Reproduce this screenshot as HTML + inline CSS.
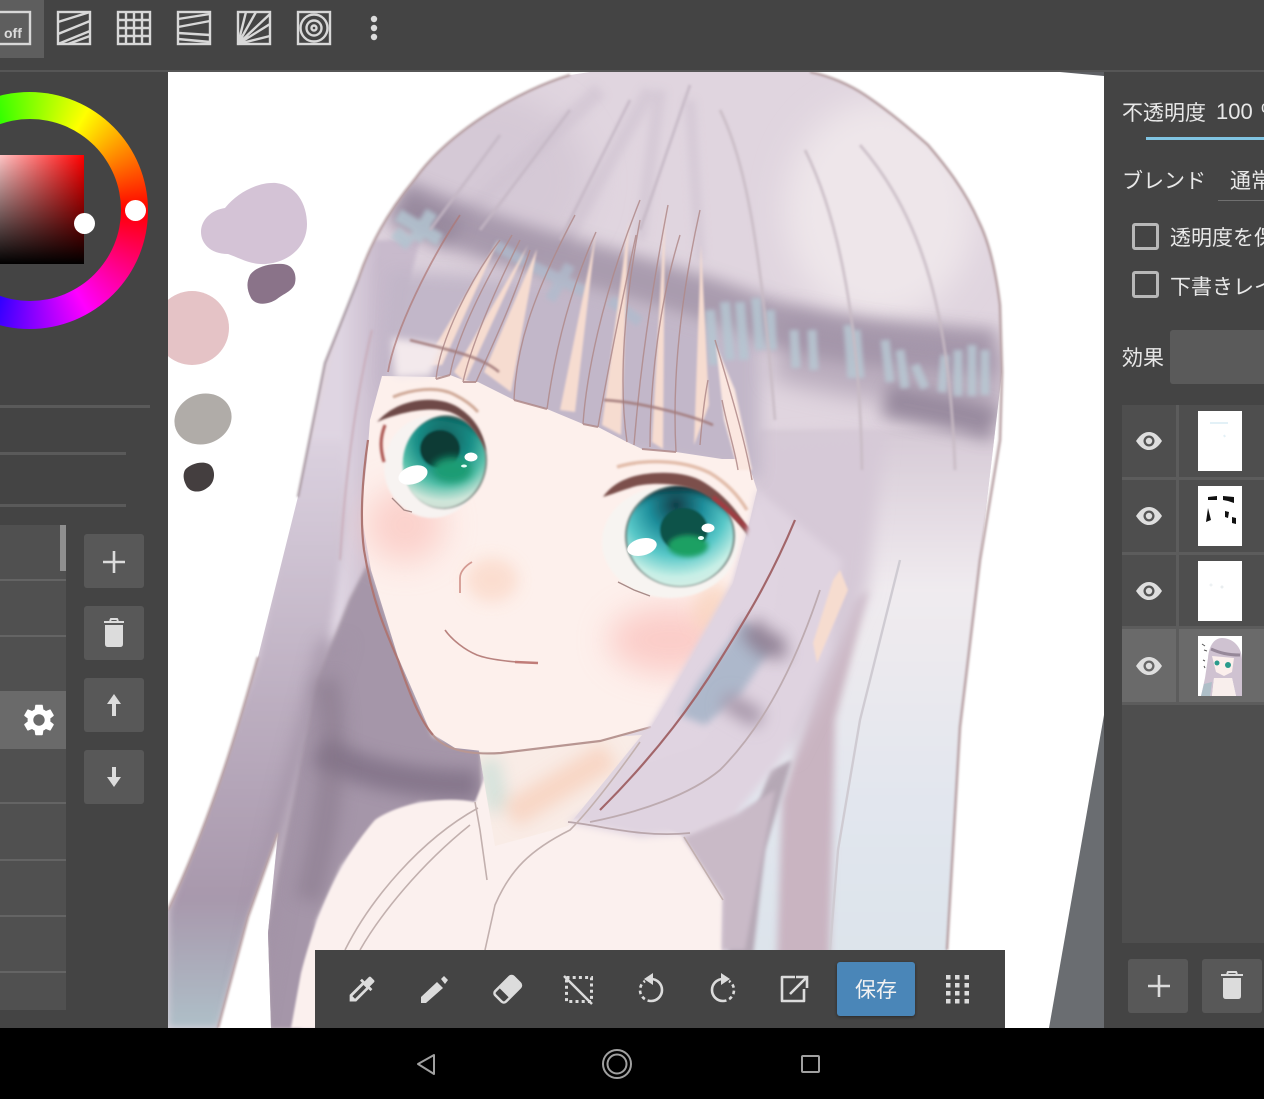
<!DOCTYPE html>
<html lang="ja">
<head>
<meta charset="utf-8">
<title>Drawing app</title>
<style>
html,body{margin:0;padding:0;width:1264px;height:1099px;overflow:hidden;background:#444}
body{position:relative;font-family:"Liberation Sans","Noto Sans CJK JP",sans-serif;color:#e8e8e8}
.a{position:absolute}
.t{position:absolute;white-space:nowrap;font-size:21px;line-height:26px;color:#e8e8e8}
.btn{position:absolute;background:#585858;border-radius:3px}
.sep{position:absolute;background:#646464;height:2px;left:0;width:66px}
.cb{position:absolute;left:1132px;width:21px;height:21px;border:3px solid #b8b8b8;border-radius:3px}
.thumb{position:absolute;left:1198px;width:44px;height:60px;background:#fff}
</style>
</head>
<body>
<svg class="a" style="left:0;top:0" width="1264" height="1099" viewBox="0 0 1264 1099">
<defs>
<filter id="b1" filterUnits="userSpaceOnUse" x="0" y="0" width="1264" height="1099"><feGaussianBlur stdDeviation="1"/></filter>
<filter id="b2" filterUnits="userSpaceOnUse" x="0" y="0" width="1264" height="1099"><feGaussianBlur stdDeviation="2"/></filter>
<filter id="b4" filterUnits="userSpaceOnUse" x="0" y="0" width="1264" height="1099"><feGaussianBlur stdDeviation="4"/></filter>
<filter id="b8" filterUnits="userSpaceOnUse" x="0" y="0" width="1264" height="1099"><feGaussianBlur stdDeviation="8"/></filter>
<filter id="b12" filterUnits="userSpaceOnUse" x="0" y="0" width="1264" height="1099"><feGaussianBlur stdDeviation="12"/></filter>
<filter id="b16" filterUnits="userSpaceOnUse" x="0" y="0" width="1264" height="1099"><feGaussianBlur stdDeviation="16"/></filter>
<clipPath id="cv"><rect x="168" y="72" width="936" height="956"/></clipPath>
<clipPath id="hair"><path d="M570,75C520,90 450,130 415,179C385,215 368,250 358,280L341,323L325,363L298,497L258,657C240,720 215,810 168,910L168,1028L218,1028L248,917L278,833L268,933L271,1028L947,1028L947,950L960,727L980,560L1002,372L1000,305C995,265 988,240 979,222C965,190 945,165 928,145C900,120 880,105 865,95C850,85 830,76 810,72L590,72Z"/></clipPath>
<clipPath id="neck"><path d="M478,745L642,735L568,826L495,846Z"/></clipPath>
<clipPath id="eyeL"><ellipse cx="444" cy="462" rx="41" ry="46" transform="rotate(10 444 462)"/></clipPath>
<clipPath id="eyeR"><ellipse cx="680" cy="536" rx="53" ry="50"/></clipPath>
<linearGradient id="rg" gradientUnits="userSpaceOnUse" x1="0" y1="430" x2="0" y2="1000"><stop offset="0" stop-color="#d6cad6"/><stop offset=".28" stop-color="#f0ebef"/><stop offset=".65" stop-color="#e2e6ee"/><stop offset="1" stop-color="#dbe3ea"/></linearGradient>
<linearGradient id="ll" gradientUnits="userSpaceOnUse" x1="0" y1="440" x2="0" y2="1028"><stop offset="0" stop-color="#dbd1df"/><stop offset=".45" stop-color="#bcaec0"/><stop offset=".78" stop-color="#a898ac"/><stop offset="1" stop-color="#aebfc8"/></linearGradient>
<linearGradient id="lu" gradientUnits="userSpaceOnUse" x1="340" y1="0" x2="380" y2="0"><stop offset="0" stop-color="#dfd5e2"/><stop offset="1" stop-color="#c8bacc"/></linearGradient>
<radialGradient id="irL" gradientUnits="userSpaceOnUse" cx="444" cy="440" r="72"><stop offset="0" stop-color="#0e5a58"/><stop offset=".38" stop-color="#1a8f88"/><stop offset=".62" stop-color="#57c0aa"/><stop offset=".85" stop-color="#cfe6da"/><stop offset="1" stop-color="#cfdcd2"/></radialGradient>
<radialGradient id="irR" gradientUnits="userSpaceOnUse" cx="676" cy="505" r="85"><stop offset="0" stop-color="#103f49"/><stop offset=".32" stop-color="#1f8f9c"/><stop offset=".6" stop-color="#58c8c8"/><stop offset=".85" stop-color="#c7efe6"/><stop offset="1" stop-color="#d7eee4"/></radialGradient>
</defs>

<rect x="0" y="0" width="1264" height="1099" fill="#444"/>
<rect x="0" y="70" width="1264" height="2" fill="#565656"/>

<g clip-path="url(#cv)">
<rect x="168" y="72" width="936" height="956" fill="#fff"/>
<path d="M1104,715L1049,1028L1104,1028Z" fill="#6a6d71"/>
<path d="M1060,72L1104,76L1104,72Z" fill="#5e6064"/>

<!-- palette blobs -->
<path d="M225,208C238,192 258,182 276,183C296,185 307,204 307,224C307,246 290,262 266,264C250,265 240,258 228,254C210,254 201,243 201,232C201,220 211,210 225,208Z" fill="#d4c3d6"/>
<path d="M250,275C256,266 272,263 283,264C293,265 297,274 295,283C293,291 283,294 277,299C268,305 256,306 251,298C247,290 246,283 250,275Z" fill="#8a7389"/>
<ellipse cx="192" cy="328" rx="37" ry="37" fill="#e5c3c6"/>
<ellipse cx="203" cy="419" rx="29" ry="25" fill="#b0aca8" transform="rotate(-20 203 419)"/>
<path d="M185,470C190,463 207,459 212,467C216,474 214,484 207,488C199,494 189,492 186,485C183,479 183,474 185,470Z" fill="#443e3f"/>

<!-- hair -->
<g clip-path="url(#hair)">
<rect x="168" y="72" width="860" height="956" fill="#e0d5df"/>
<ellipse cx="480" cy="180" rx="110" ry="90" fill="#d5c9d6" filter="url(#b16)"/>
<ellipse cx="880" cy="210" rx="95" ry="110" fill="#eee6ea" filter="url(#b16)"/>
<g fill="none" stroke="#cfc2d0" filter="url(#b4)" opacity=".6">
<path d="M650,90L560,250" stroke-width="14"/>
<path d="M660,90L640,240" stroke-width="12"/>
<path d="M600,90L460,220" stroke-width="16"/>
<path d="M690,100L700,260" stroke-width="10"/>
</g>
<!-- upper left lock -->
<path d="M358,240L420,240L385,380L368,460L362,520L374,580L398,660L345,820L300,850L260,700L298,497L341,323Z" fill="url(#lu)" filter="url(#b2)"/>
<!-- outer lower lock -->
<path d="M300,440L345,440L348,520L322,680L280,833L250,917L218,1028L168,1028L168,910L258,657Z" fill="url(#ll)" filter="url(#b4)"/>
<!-- behind-face mass -->
<path d="M368,565L400,660L432,738L480,750L480,805L420,800L375,822L340,865L315,920L300,1028L270,1028L268,930L290,820L318,680L350,600Z" fill="#a5969f" filter="url(#b2)"/>
<path d="M368,565L400,660L432,738L480,750L480,805L420,800L375,822L340,865L315,920L300,1028L270,1028L268,930L290,820L318,680L350,600Z" fill="#a596ac" filter="url(#b2)" opacity=".8"/>
<path d="M318,640L350,640L300,800L262,1028L230,1028L272,820Z" fill="#a293a6" filter="url(#b8)" opacity=".7"/>
<path d="M320,750C360,775 420,785 478,785" stroke="#7f7085" stroke-width="30" fill="none" filter="url(#b8)" opacity=".8"/>
<path d="M325,680C338,720 335,800 308,900" stroke="#857688" stroke-width="26" fill="none" filter="url(#b8)" opacity=".5"/>
<!-- right long strands -->
<path d="M760,430L1005,430L960,1028L722,1028Z" fill="url(#rg)" filter="url(#b2)"/>
<path d="M868,590L835,720L828,1028L775,1028L782,800L815,690L850,600Z" fill="#c9b4c1" filter="url(#b4)"/>
<path d="M722,1028L745,1028L765,850L792,760L770,770L735,870Z" fill="#b5a8b5" filter="url(#b2)"/>
<path d="M750,440L885,430L868,590L820,700L790,760L755,620Z" fill="#d6c9d7" filter="url(#b8)"/>
<!-- bang fill -->
<path d="M388,270L560,280L760,340L760,480L600,450L500,420L380,385Z" fill="#c1b6c8" filter="url(#b8)" opacity=".95"/>
<!-- shadow band -->
<path d="M398,202C440,218 490,240 560,258C620,275 680,290 740,312C810,340 890,345 995,352" stroke="#9c8ea3" stroke-width="46" fill="none" filter="url(#b8)" opacity=".8"/>
<path d="M780,345C850,365 930,370 1005,385" stroke="#a193a7" stroke-width="70" fill="none" filter="url(#b12)" opacity=".6"/>
<path d="M400,205C420,215 440,225 455,235" stroke="#8b7d92" stroke-width="30" fill="none" filter="url(#b8)" opacity=".55"/>
<path d="M885,400C920,408 955,412 995,425" stroke="#8f8196" stroke-width="34" fill="none" filter="url(#b8)" opacity=".85"/>
<path d="M398,215L440,240M415,240L432,212M395,232L410,245" stroke="#b2c4d0" stroke-width="13" filter="url(#b2)" opacity=".85"/>
<path d="M530,265L585,292M550,300L570,265M610,300L640,322M495,245L525,262" stroke="#afbccd" stroke-width="11" filter="url(#b2)" opacity=".75"/>
<path d="M710,310L714,365M725,302L730,360M740,302L744,360M756,298L760,350M770,310L772,350" stroke="#b5c6d2" stroke-width="10" filter="url(#b2)" opacity=".85"/>
<path d="M794,330L796,368M812,330L814,370M848,325L852,378M856,330L860,378M885,340L890,382M900,350L905,388M915,365L925,388M945,355L942,392M958,350L958,396M972,345L972,396M985,350L985,395" stroke="#b8c8d3" stroke-width="9" filter="url(#b2)" opacity=".85"/>
<!-- subtle strand lines -->
<g fill="none" filter="url(#b1)" opacity=".8">
<path d="M630,100L560,240M690,85L640,230M570,110L480,230M500,135L430,230" stroke="#c4b7c4" stroke-width="3"/>
<path d="M720,110C745,160 760,240 775,420M805,150C840,220 860,330 862,470M860,145C925,220 950,320 955,470" stroke="#c8bbc4" stroke-width="3"/>
<path d="M372,330C355,400 345,480 340,560" stroke="#c7a9b5" stroke-width="2"/>
</g>
</g>

<!-- body -->
<path d="M475,802C440,795 395,805 375,820C345,855 320,900 301,973L291,1028L722,1028L722,950L723,897L683,837L640,810L568,820L500,740Z" fill="#fbf0ee" filter="url(#b1)"/>
<path d="M683,837L723,897L722,950L745,950L775,790L737,813Z" fill="#c9bac7" filter="url(#b2)"/>
<!-- neck -->
<path d="M478,745L642,735L568,826L495,846Z" fill="#f9ece6"/>
<g clip-path="url(#neck)">
<path d="M488,760L498,810" stroke="#bcdcd4" stroke-width="22" fill="none" filter="url(#b8)" opacity=".6"/>
<path d="M510,815L610,755" stroke="#f8cdb8" stroke-width="28" fill="none" filter="url(#b8)" opacity=".7"/>
</g>

<!-- face -->
<path d="M367,460L370,420L382,376L436,377L450,375L463,380L478,382L514,400L547,409L583,424L598,427L627,442L642,449L676,452L722,459L747,459L757,490L750,520L733,583L668,700L651,727L601,740L501,753L455,748L431,733L398,657L371,570L361,513Z" fill="#fdf0ec"/>
<ellipse cx="405" cy="525" rx="40" ry="38" fill="#fbcac4" filter="url(#b16)" opacity=".8"/>
<ellipse cx="670" cy="640" rx="62" ry="34" fill="#fbc4c0" filter="url(#b16)" opacity=".8"/>
<ellipse cx="715" cy="610" rx="22" ry="26" fill="#f9d3bc" filter="url(#b8)" opacity=".7"/>
<ellipse cx="492" cy="580" rx="26" ry="22" fill="#fbdccd" filter="url(#b8)" opacity=".9"/>

<!-- peach bang gaps -->
<g fill="#f6dcd0" filter="url(#b1)">
<path d="M499,239L442,365L424,365Z"/>
<path d="M528,245L465,382L454,372Z"/>
<path d="M537,249L511,392L484,372Z"/>
<path d="M596,232L575,412L560,410Z"/>
<path d="M629,219L621,435L602,425Z"/>
<path d="M665,205L663,449L652,442Z"/>
<path d="M701,245L709,405L694,445Z"/>
<path d="M716,345L735,390L752,470L738,470L724,420Z" fill="#fbe7e0"/>
</g>
<path d="M392,338L395,378L430,376L445,345Z" fill="#f3e9ec" filter="url(#b4)"/>

<!-- bang lines -->
<g fill="none" stroke="#b08a8a" stroke-width="1.4" opacity=".85">
<path d="M514,400L547,409M583,424L598,427M642,449L676,452M436,379L450,375M463,382L476,382" stroke-width="2"/>
<path d="M514,400C516,350 530,300 575,215M547,409C555,350 570,290 596,232M583,424C586,380 600,300 640,200M598,427C606,380 620,310 636,235M627,442C618,380 625,300 640,220M634,445C640,370 650,300 668,205M676,452C672,380 680,300 700,210M650,447C650,380 660,300 680,235"/>
<path d="M436,379C440,340 470,280 500,240M450,375C456,340 480,290 512,235M463,382C470,350 490,300 520,240M476,382C490,350 510,310 530,250"/>
<path d="M715,340C730,390 745,440 752,480M722,400C728,430 735,450 738,470M700,445C702,420 705,395 708,380"/>
</g>
<g fill="none" stroke="#a27a7a" stroke-width="2.4" filter="url(#b1)">
<path d="M410,340C440,348 480,355 499,372M604,400C640,402 690,415 713,425"/>
</g>
<g fill="none" stroke="#ae7673" stroke-width="1.8">
<path d="M388,372C395,330 430,260 460,215" opacity=".7"/>
<path d="M368,440C362,480 360,520 364,550C372,600 385,630 398,660C410,695 420,720 433,735" stroke-width="2.2"/>
</g>
<path d="M433,735C445,750 470,755 501,753L600,741L651,727" stroke="#b89692" stroke-width="2.2" fill="none"/>

<!-- outline -->
<g fill="none" stroke="#b9a3a6" stroke-width="2.6" filter="url(#b1)">
<path d="M570,75C520,90 450,130 415,179C385,215 368,250 358,280"/>
<path d="M810,72C830,76 850,85 865,95C880,105 900,120 928,145C945,165 965,190 979,222C988,240 995,265 1000,305L1002,372L1000,440L980,560L960,727L947,950"/>
<path d="M358,280L341,323L325,363L298,497" stroke="#b0a2aa"/>
<path d="M258,657C240,720 215,810 168,910M278,833L248,917L218,1028"/>
</g>

<!-- eyes -->
<ellipse cx="432" cy="467" rx="48" ry="51" fill="#f7f3f1" filter="url(#b1)"/>
<g filter="url(#b1)">
<ellipse cx="445" cy="462" rx="42" ry="47" fill="#7a8781" transform="rotate(10 445 462)"/>
<g clip-path="url(#eyeL)">
<rect x="395" y="410" width="100" height="100" fill="url(#irL)"/>
<ellipse cx="440" cy="449" rx="20" ry="19" fill="#0a3a34"/>
<ellipse cx="452" cy="470" rx="20" ry="13" fill="#1f9c73" filter="url(#b4)"/>
<path d="M403,430C420,412 460,412 485,440L480,428L450,410L410,415Z" fill="#0c4c4a" filter="url(#b4)"/>
</g>
</g>
<ellipse cx="413" cy="475" rx="15" ry="9" fill="#fff" transform="rotate(-18 413 475)"/>
<ellipse cx="471" cy="457" rx="6.5" ry="4.5" fill="#fff"/>
<ellipse cx="464" cy="466" rx="3" ry="1.5" fill="#e6fff8"/>
<path d="M377,422C388,410 400,404 415,401C430,398 450,400 462,410C476,420 484,434 486,452C478,432 466,418 450,412C430,406 400,412 377,422Z" fill="#6e4a46" filter="url(#b1)"/>
<path d="M393,397C410,390 437,385 455,395C465,400 472,405 478,412" stroke="#cfa997" stroke-width="3" fill="none" filter="url(#b1)"/>
<path d="M385,425C380,438 380,448 384,462" stroke="#a8504c" stroke-width="3" fill="none" filter="url(#b1)"/>

<ellipse cx="670" cy="542" rx="68" ry="56" fill="#f7f4f1" filter="url(#b1)"/>
<g filter="url(#b1)">
<ellipse cx="680" cy="536" rx="55" ry="51" fill="#6a7d78"/>
<g clip-path="url(#eyeR)">
<rect x="625" y="485" width="110" height="105" fill="url(#irR)"/>
<path d="M630,510C650,485 710,480 735,520L730,490L680,480L635,490Z" fill="#0d2f36" filter="url(#b4)"/>
<ellipse cx="684" cy="530" rx="24" ry="22" fill="#0e5248"/>
<ellipse cx="688" cy="546" rx="20" ry="11" fill="#1fa063" filter="url(#b2)"/>
</g>
</g>
<ellipse cx="642" cy="547" rx="15" ry="8.5" fill="#fff" transform="rotate(-14 642 547)"/>
<ellipse cx="708" cy="528" rx="6.5" ry="4.5" fill="#fff"/>
<ellipse cx="701" cy="538" rx="3" ry="2" fill="#eafffa"/>
<path d="M603,497C610,487 620,480 635,476C650,472 680,470 700,480C722,492 745,515 757,550C742,525 725,505 700,492C680,482 645,482 630,488C620,491 610,495 603,497Z" fill="#7c4f4b" filter="url(#b1)"/>
<path d="M713,497C725,507 740,520 752,534" stroke="#9e3c42" stroke-width="4.5" fill="none" filter="url(#b1)"/>
<path d="M617,467C640,460 680,458 710,473C725,482 738,495 747,510" stroke="#e2bdab" stroke-width="3.5" fill="none" filter="url(#b1)"/>
<path d="M392,498L404,510L412,512M618,582L634,590L650,596" stroke="#a88b88" stroke-width="1.3" fill="none"/>

<!-- nose and mouth -->
<path d="M472,562C465,566 460,572 460,578L460,593" stroke="#d49a92" stroke-width="1.8" fill="none"/>
<path d="M445,630C452,640 465,650 477,655C490,660 515,662 520,662" stroke="#b9837f" stroke-width="1.6" fill="none"/>
<path d="M515,662L538,663" stroke="#c07c78" stroke-width="2.4" fill="none"/>

<!-- right front lock -->
<path d="M733,583L651,727L600,800L568,822L640,837L690,833L737,813L780,760L830,650L842,560L757,490L752,520Z" fill="#dfd3e0" filter="url(#b4)"/>
<path d="M733,583L664,705L625,770L700,745L770,650L780,560L757,500Z" fill="#e0d4e1" filter="url(#b2)"/>
<path d="M840,570L848,590L817,663L813,643L833,580Z" fill="#f6dccf" filter="url(#b1)"/>
<path d="M745,620L700,680L680,715L705,725L740,695L770,650Z" fill="#adb8cb" filter="url(#b4)"/>
<path d="M750,625C760,640 765,650 785,645" stroke="#8e7f93" stroke-width="24" fill="none" filter="url(#b8)" opacity=".95"/>
<path d="M725,700L760,720" stroke="#a595a8" stroke-width="18" filter="url(#b8)"/>
<path d="M795,520C770,580 745,620 720,660C695,700 660,750 600,810" stroke="#a2666a" stroke-width="2.2" fill="none"/>
<path d="M820,590C800,650 770,720 720,770C690,795 640,812 590,822" stroke="#bdabb0" stroke-width="1.8" fill="none"/>
<path d="M568,822C600,825 640,838 690,833" stroke="#b9a6ab" stroke-width="1.8" fill="none"/>

<!-- body lines -->
<g fill="none" stroke="#c2b0ae" stroke-width="1.6">
<path d="M475,802L480,830L487,880M478,808C420,840 370,900 345,950M470,825C420,865 380,915 360,950"/>
<path d="M640,742C620,770 590,810 570,830C530,850 510,870 495,905L485,950"/>
<path d="M684,837L723,900"/>
<path d="M900,560L885,620L860,720L838,850L830,950" stroke="#cfcbd2" stroke-width="2.4"/>
</g>
</g>

<!-- top bar icons -->
<rect x="0" y="0" width="44" height="58" fill="#5e5e5e"/>
<g fill="none" stroke="#d8d8d8" stroke-width="2.4">
<rect x="-4" y="12" width="34" height="32"/>
<rect x="58" y="12" width="32" height="32"/>
<path d="M58,22L90,12M58,34L90,21M58,44L90,31M68,44L90,36"/>
<rect x="118" y="12" width="32" height="32"/>
<path d="M126,12V44M134,12V44M142,12V44M118,20H150M118,28H150M118,36H150"/>
<rect x="178" y="12" width="32" height="32"/>
<path d="M178,19L210,14M178,27L210,21M178,33L210,35M178,39L210,42"/>
<rect x="238" y="12" width="32" height="32"/>
<path d="M238,44L246,12M238,44L256,12M238,44L270,14M238,44L270,24M238,44L270,36"/>
<rect x="298" y="12" width="32" height="32"/>
<circle cx="314" cy="28" r="13.5"/>
<circle cx="314" cy="28" r="7.5"/>
<circle cx="314" cy="28" r="2.5"/>
</g>
<circle cx="374" cy="19" r="3.2" fill="#dcdcdc"/><circle cx="374" cy="28" r="3.2" fill="#dcdcdc"/><circle cx="374" cy="37" r="3.2" fill="#dcdcdc"/>

<!-- bottom nav -->
<rect x="0" y="1028" width="1264" height="71" fill="#000"/>
<path d="M434,1055L418,1064L434,1074Z" fill="none" stroke="#a0a0a0" stroke-width="2" stroke-linejoin="round"/>
<circle cx="617" cy="1064" r="14" fill="none" stroke="#a0a0a0" stroke-width="2"/>
<circle cx="617" cy="1064" r="9.5" fill="none" stroke="#a0a0a0" stroke-width="2"/>
<rect x="802" y="1056" width="17" height="16" rx="1" fill="none" stroke="#a0a0a0" stroke-width="2"/>

<!-- bottom toolbar -->
<rect x="315" y="950" width="690" height="78" fill="#444"/>
<g fill="#dcdcdc">
<path transform="translate(345.5,972.5) scale(1.38)" d="M20.71 5.63l-2.34-2.34c-.39-.39-1.02-.39-1.41 0l-3.12 3.12-1.93-1.91-1.41 1.41 1.42 1.42L3 16.25V21h4.75l8.92-8.92 1.42 1.42 1.41-1.41-1.92-1.92 3.12-3.12c.4-.4.4-1.03.01-1.42zM6.92 19L5 17.08l8.06-8.06 1.92 1.92L6.92 19z"/>
<path d="M441,979L444,976L448,980L445,984Z"/>
<path d="M437,982L443,988L426,1003L421,1003L421,997Z"/>
<g transform="rotate(-45 507 990)"><rect x="495" y="982.5" width="26" height="15" rx="3" fill="none" stroke="#dcdcdc" stroke-width="2.5"/><path d="M503,982h15a3,3 0 0 1 3,3v10a3,3 0 0 1 -3,3h-15Z"/></g>
</g>
<rect x="566.5" y="977.5" width="25" height="24" fill="none" stroke="#dcdcdc" stroke-width="3" stroke-dasharray="3 3.2"/>
<path d="M564,976L592,1004" stroke="#dcdcdc" stroke-width="2.5"/>
<g fill="none" stroke="#dcdcdc" stroke-width="2.6">
<path d="M651,979A11,11 0 0 1 651,1001"/>
<path d="M651,1001A11,11 0 0 1 640,990A11,11 0 0 1 645,981" stroke-dasharray="3.5 3"/>
<path d="M723,979A11,11 0 0 0 723,1001"/>
<path d="M723,1001A11,11 0 0 0 734,990A11,11 0 0 0 729,981" stroke-dasharray="3.5 3"/>
<path d="M804,989V1001H782V977H795" stroke-linejoin="round"/>
<path d="M790,994L806,978M796,977H807V988"/>
</g>
<path d="M653,973V985L644,979Z" fill="#dcdcdc"/>
<path d="M721,973V985L730,979Z" fill="#dcdcdc"/>
<g fill="#dcdcdc">
<rect x="946" y="975" width="4.5" height="4.5"/><rect x="955" y="975" width="4.5" height="4.5"/><rect x="964.5" y="975" width="4.5" height="4.5"/>
<rect x="946" y="983" width="4.5" height="4.5"/><rect x="955" y="983" width="4.5" height="4.5"/><rect x="964.5" y="983" width="4.5" height="4.5"/>
<rect x="946" y="991" width="4.5" height="4.5"/><rect x="955" y="991" width="4.5" height="4.5"/><rect x="964.5" y="991" width="4.5" height="4.5"/>
<rect x="946" y="999" width="4.5" height="4.5"/><rect x="955" y="999" width="4.5" height="4.5"/><rect x="964.5" y="999" width="4.5" height="4.5"/>
</g>
</svg>

<!-- off label -->
<div class="a" style="left:4px;top:24px;font-size:14px;line-height:18px;font-weight:bold;color:#dcdcdc">off</div>

<!-- left panel -->
<div class="a" style="left:-89px;top:91.5px;width:237px;height:237px;border-radius:50%;background:conic-gradient(from 90deg,#f00,#f0f,#00f,#0ff,#0f0,#ff0,#f00)"></div>
<div class="a" style="left:-61px;top:119px;width:182px;height:182px;border-radius:50%;background:#444"></div>
<div class="a" style="left:-25px;top:155px;width:109px;height:109px;background:linear-gradient(to top,#000,rgba(0,0,0,0)),linear-gradient(to right,#fff,#f00)"></div>
<div class="a" style="left:73.5px;top:212.5px;width:21px;height:21px;border-radius:50%;background:#fff"></div>
<div class="a" style="left:124.5px;top:199.5px;width:21px;height:21px;border-radius:50%;background:#fff"></div>

<div class="a" style="left:0;top:405px;width:150px;height:3px;background:#5a5a5a"></div>
<div class="a" style="left:0;top:452px;width:126px;height:3px;background:#5a5a5a"></div>
<div class="a" style="left:0;top:504px;width:126px;height:3px;background:#5a5a5a"></div>

<div class="a" style="left:0;top:525px;width:66px;height:485px;background:#505050"></div>
<div class="a" style="left:60px;top:525px;width:6px;height:46px;background:#8f8f8f"></div>
<div class="sep" style="top:579px"></div>
<div class="sep" style="top:635px"></div>
<div class="a" style="left:0;top:691px;width:66px;height:58px;background:#6a6a6a"></div>
<div class="sep" style="top:802px"></div>
<div class="sep" style="top:859px"></div>
<div class="sep" style="top:915px"></div>
<div class="sep" style="top:971px"></div>
<svg class="a" style="left:20px;top:701px" width="38" height="38" viewBox="0 0 24 24"><path fill="#fff" d="M19.14 12.94c.04-.3.06-.61.06-.94 0-.32-.02-.64-.07-.94l2.03-1.58c.18-.14.23-.41.12-.61l-1.92-3.32c-.12-.22-.37-.29-.59-.22l-2.39.96c-.5-.38-1.03-.7-1.62-.94l-.36-2.54c-.04-.24-.24-.41-.48-.41h-3.84c-.24 0-.43.17-.47.41l-.36 2.54c-.59.24-1.13.57-1.62.94l-2.39-.96c-.22-.08-.47 0-.59.22L2.74 8.87c-.12.21-.08.47.12.61l2.03 1.58c-.05.3-.09.63-.09.94s.02.64.07.94l-2.03 1.58c-.18.14-.23.41-.12.61l1.92 3.32c.12.22.37.29.59.22l2.39-.96c.5.38 1.03.7 1.62.94l.36 2.54c.05.24.24.41.48.41h3.84c.24 0 .44-.17.47-.41l.36-2.54c.59-.24 1.13-.56 1.62-.94l2.39.96c.22.08.47 0 .59-.22l1.92-3.32c.12-.22.07-.47-.12-.61l-2.01-1.58zM12 15.6c-1.98 0-3.6-1.62-3.6-3.6s1.62-3.6 3.6-3.6 3.6 1.62 3.6 3.6-1.62 3.6-3.6 3.6z"/></svg>

<div class="btn" style="left:84px;top:534px;width:60px;height:54px"></div>
<div class="btn" style="left:84px;top:606px;width:60px;height:54px"></div>
<div class="btn" style="left:84px;top:678px;width:60px;height:54px"></div>
<div class="btn" style="left:84px;top:750px;width:60px;height:54px"></div>
<svg class="a" style="left:84px;top:534px" width="60" height="270" viewBox="0 0 60 270">
<path d="M30,17V39M19,28H41" stroke="#dcdcdc" stroke-width="2.6"/>
<path d="M20,88H40M26,87L27,85H33L34,87" stroke="#dcdcdc" stroke-width="2" fill="none"/>
<path d="M21,91H39V110Q39,113 36,113H24Q21,113 21,110Z" fill="#dcdcdc"/>
<path d="M30,160L23,170H28V182H32V170H37Z" fill="#dcdcdc"/>
<path d="M30,253L23,243H28V233H32V243H37Z" fill="#dcdcdc"/>
</svg>

<!-- right panel -->
<div class="a" style="left:1104px;top:72px;width:160px;height:956px;background:#444"></div>
<div class="t" style="left:1122px;top:101px">不透明度</div>
<div class="t" style="left:1216px;top:99px;font-size:22px">100</div>
<div class="t" style="left:1261px;top:99px">%</div>
<div class="a" style="left:1146px;top:137px;width:118px;height:3px;background:#80c4e2"></div>
<div class="t" style="left:1122px;top:169px">ブレンド</div>
<div class="t" style="left:1230px;top:169px">通常</div>
<div class="a" style="left:1218px;top:200px;width:46px;height:1px;background:#707070"></div>
<div class="cb" style="top:223px"></div>
<div class="t" style="left:1170px;top:226px">透明度を保護</div>
<div class="cb" style="top:271px"></div>
<div class="t" style="left:1170px;top:275px">下書きレイヤー</div>
<div class="t" style="left:1122px;top:346px">効果</div>
<div class="a" style="left:1170px;top:330px;width:94px;height:54px;background:#5a5a5a;border-radius:3px 0 0 3px"></div>

<div class="a" style="left:1122px;top:405px;width:142px;height:538px;background:#4e4e4e"></div>
<div class="a" style="left:1122px;top:628px;width:142px;height:74px;background:#6a6a6a"></div>
<div class="a" style="left:1122px;top:477px;width:142px;height:3px;background:#5c5c5c"></div>
<div class="a" style="left:1122px;top:552px;width:142px;height:3px;background:#5c5c5c"></div>
<div class="a" style="left:1122px;top:626px;width:142px;height:3px;background:#5c5c5c"></div>
<div class="a" style="left:1122px;top:702px;width:142px;height:3px;background:#5c5c5c"></div>
<div class="a" style="left:1176px;top:405px;width:3px;height:297px;background:#5c5c5c"></div>

<svg class="a" style="left:1136px;top:432px" width="26" height="243" viewBox="0 0 26 243">
<g><path d="M0,9C4,3 8,0 13,0C18,0 22,3 26,9C22,15 18,18 13,18C8,18 4,15 0,9Z" fill="#dedede"/><circle cx="13" cy="9" r="5.5" fill="#555"/><circle cx="13" cy="9" r="3.2" fill="#dedede"/></g>
<g transform="translate(0,75)"><path d="M0,9C4,3 8,0 13,0C18,0 22,3 26,9C22,15 18,18 13,18C8,18 4,15 0,9Z" fill="#dedede"/><circle cx="13" cy="9" r="5.5" fill="#555"/><circle cx="13" cy="9" r="3.2" fill="#dedede"/></g>
<g transform="translate(0,150)"><path d="M0,9C4,3 8,0 13,0C18,0 22,3 26,9C22,15 18,18 13,18C8,18 4,15 0,9Z" fill="#dedede"/><circle cx="13" cy="9" r="5.5" fill="#555"/><circle cx="13" cy="9" r="3.2" fill="#dedede"/></g>
<g transform="translate(0,225)"><path d="M0,9C4,3 8,0 13,0C18,0 22,3 26,9C22,15 18,18 13,18C8,18 4,15 0,9Z" fill="#dedede"/><circle cx="13" cy="9" r="5.5" fill="#666"/><circle cx="13" cy="9" r="3.2" fill="#dedede"/></g>
</svg>

<div class="thumb" style="top:411px"></div>
<svg class="a" style="left:1198px;top:411px" width="44" height="60" viewBox="0 0 44 60"><path d="M12,12H30M26,24L27,26" stroke="#e3f1f7" stroke-width="2"/></svg>
<div class="thumb" style="top:486px"></div>
<svg class="a" style="left:1198px;top:486px" width="44" height="60" viewBox="0 0 44 60"><g fill="#111"><path d="M10,11L19,10L19,14L10,14Z"/><path d="M25,10L36,11L36,17L30,15L25,14Z"/><path d="M10,22L13,34L8,36Z"/><path d="M27,25L31,26L30,32L27,31Z"/><path d="M34,31L38,32L38,38L34,37Z"/></g></svg>
<div class="thumb" style="top:561px"></div>
<svg class="a" style="left:1198px;top:561px" width="44" height="60" viewBox="0 0 44 60"><circle cx="13" cy="24" r="1.5" fill="#edf1f3"/><circle cx="24" cy="26" r="1.5" fill="#e9edef"/></svg>
<div class="thumb" style="top:636px"></div>
<svg class="a" style="left:1198px;top:636px" width="44" height="60" viewBox="0 0 44 60">
<path d="M24,2C16,2 11,10 10,22L7,42L3,60H14L16,42H34L38,60H44V24C44,10 34,2 24,2Z" fill="#cfc2d1"/>
<path d="M13,13C22,17 30,19 42,19" stroke="#968899" stroke-width="3" fill="none"/>
<path d="M14,20L36,22L34,36L26,40L18,36Z" fill="#fbefec"/>
<circle cx="19" cy="27" r="2.5" fill="#2a9b8c"/><circle cx="30" cy="29" r="3" fill="#2a9b8c"/>
<path d="M16,42L34,42L38,60H14Z" fill="#f8eeec"/>
<path d="M6,48L3,60H12L14,46Z" fill="#aebfc8"/>
<path d="M4,8L7,10M6,14L9,15M5,24L7,25M6,30L7,32" stroke="#555" stroke-width="1"/>
</svg>

<div class="btn" style="left:1128px;top:959px;width:60px;height:54px"></div>
<div class="btn" style="left:1202px;top:959px;width:60px;height:54px"></div>
<svg class="a" style="left:1128px;top:959px" width="136" height="54" viewBox="0 0 136 54">
<path d="M31,16V38M20,27H42" stroke="#dcdcdc" stroke-width="2.6"/>
<path d="M93,16H115M99,15L100,13H108L109,15" stroke="#dcdcdc" stroke-width="2" fill="none"/>
<path d="M95,19H113V37Q113,40 110,40H98Q95,40 95,37Z" fill="#dcdcdc"/>
</svg>

<!-- save button -->
<div class="a" style="left:837px;top:964px;width:78px;height:52px;margin-top:-2px;padding-top:2px;background:#4a86b8;border-radius:3px;box-shadow:0 1px 3px rgba(0,0,0,.4);text-align:center;line-height:54px;font-size:21px;color:#f2f2f2">保存</div>
</body>
</html>
